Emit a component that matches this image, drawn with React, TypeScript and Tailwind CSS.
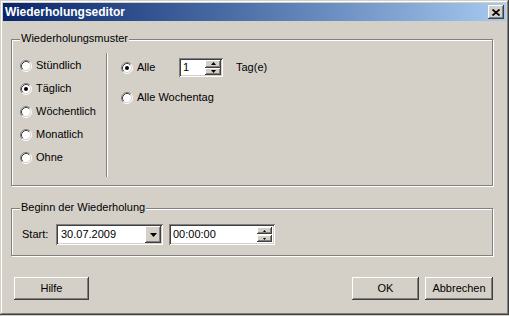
const raised =
  "shadow-[inset_-1px_-1px_0_#404040,inset_1px_1px_0_#ffffff,inset_-2px_-2px_0_#808080,inset_2px_2px_0_#d4d0c8]";
const sunken =
  "shadow-[inset_1px_1px_0_#808080,inset_-1px_-1px_0_#ffffff,inset_2px_2px_0_#404040,inset_-2px_-2px_0_#d4d0c8]";

const Radio = ({ label, checked = false, rowClass = "h-[23px]" }: { label: string; checked?: boolean; rowClass?: string }) => (
  <div className={`flex items-center gap-[4px] ${rowClass}`}>
    <svg width="12" height="12" viewBox="0 0 12 12" className="shrink-0">
      <circle cx="6" cy="6" r="5" fill="#ffffff" />
      <path d="M2.11 9.89 A5.5 5.5 0 0 1 9.89 2.11" stroke="#808080" fill="none" />
      <path d="M9.89 2.11 A5.5 5.5 0 0 1 2.11 9.89" stroke="#ffffff" fill="none" />
      <path d="M2.82 9.18 A4.5 4.5 0 0 1 9.18 2.82" stroke="#404040" fill="none" />
      <path d="M9.18 2.82 A4.5 4.5 0 0 1 2.82 9.18" stroke="#d4d0c8" fill="none" />
      {checked && <circle cx="6" cy="6" r="2" fill="#000000" />}
    </svg>
    <span className="whitespace-nowrap">{label}</span>
  </div>
);

const Group = ({ title, className, children }: { title: string; className: string; children?: React.ReactNode }) => (
  <div className={`relative border border-[#808080] shadow-[1px_1px_0_#ffffff,inset_1px_1px_0_#ffffff] ${className}`}>
    <span className="absolute left-[8px] top-[-8px] bg-[#d4d0c8] px-[1px] whitespace-nowrap">{title}</span>
    {children}
  </div>
);

const Arrow = ({ up, w = 5, h = 3 }: { up?: boolean; w?: number; h?: number }) => (
  <svg width={w} height={h} viewBox={`0 0 ${w} ${h}`}>
    <polygon points={up ? `${w / 2},0 ${w},${h} 0,${h}` : `0,0 ${w},0 ${w / 2},${h}`} fill="#000000" />
  </svg>
);

const Btn = ({ label, className }: { label: string; className: string }) => (
  <button className={`h-[23px] flex items-center justify-center bg-[#d4d0c8] ${raised} ${className}`}>{label}</button>
);

export default function App() {
  return (
    <div className="w-[509px] h-[316px] bg-[#d4d0c8] font-['Liberation_Sans',Arial,sans-serif] text-[11px] leading-[13px] text-black">
      <div className="h-[315px] flex flex-col shadow-[inset_-1px_-1px_0_#404040,inset_1px_1px_0_#d4d0c8,inset_-2px_-2px_0_#808080,inset_2px_2px_0_#ffffff]">
        {/* title bar */}
        <div className="mx-[3px] mt-[3px] h-[18px] flex items-center justify-between pl-[2px] pr-[2px] bg-linear-to-r from-[#0a246a] to-[#a6caf0]">
          <span className="text-white font-bold text-[12px] leading-[14px]">Wiederholungseditor</span>
          <div className={`w-[16px] h-[14px] flex items-center justify-center bg-[#d4d0c8] ${raised}`}>
            <svg width="8" height="7" viewBox="0 0 8 7">
              <path d="M0.5 0.5 L7.5 6.5 M7.5 0.5 L0.5 6.5" stroke="#000000" strokeWidth="1.7" />
            </svg>
          </div>
        </div>

        <Group title="Wiederholungsmuster" className="mt-[18px] ml-[11px] w-[482px] h-[147px] flex">
          <div className="w-[94px] pl-[8px] pt-[14px] flex flex-col">
            <Radio label="Stündlich" />
            <Radio label="Täglich" checked />
            <Radio label="Wöchentlich" />
            <Radio label="Monatlich" />
            <Radio label="Ohne" />
          </div>
          <div className="w-[2px] h-[124px] mt-[13px] border-l border-[#808080] bg-white" />
          <div className="pl-[13px] pt-[18px] flex flex-col">
            <div className="flex items-center h-[19px]">
              <div className="w-[58px]">
                <Radio label="Alle" checked rowClass="h-[19px]" />
              </div>
              <div className={`w-[44px] h-[19px] bg-white flex items-stretch p-[2px] ${sunken}`}>
                <span className="flex-1 pl-[2px] self-center">1</span>
                <div className="w-[16px] flex flex-col">
                  <div className={`flex-1 flex items-center justify-center bg-[#d4d0c8] ${raised}`}>
                    <Arrow up />
                  </div>
                  <div className={`flex-1 flex items-center justify-center bg-[#d4d0c8] ${raised}`}>
                    <Arrow />
                  </div>
                </div>
              </div>
              <span className="ml-[13px]">Tag(e)</span>
            </div>
            <div className="mt-[11px]">
              <Radio label="Alle Wochentag" rowClass="h-[19px]" />
            </div>
          </div>
        </Group>

        <Group title="Beginn der Wiederholung" className="mt-[22px] ml-[11px] w-[482px] h-[48px]">
          <div className="pt-[15px] pl-[10px] flex items-center">
            <span className="w-[34px]">Start:</span>
            <div className={`w-[107px] h-[21px] bg-white flex items-center p-[2px] ${sunken}`}>
              <span className="flex-1 pl-[3px]">30.07.2009</span>
              <div className={`w-[16px] h-[17px] flex items-center justify-center bg-[#d4d0c8] ${raised}`}>
                <Arrow w={7} h={4} />
              </div>
            </div>
            <div className={`ml-[6px] w-[106px] h-[21px] bg-white flex items-center p-[2px] ${sunken}`}>
              <span className="flex-1 pl-[2px]">00:00:00</span>
              <div className="w-[15px] mr-[1px] flex flex-col gap-[1px]">
                <div className={`h-[7px] flex items-center justify-center bg-[#d4d0c8] ${raised}`}>
                  <Arrow up w={3} h={2} />
                </div>
                <div className={`h-[7px] flex items-center justify-center bg-[#d4d0c8] ${raised}`}>
                  <Arrow w={3} h={2} />
                </div>
              </div>
            </div>
          </div>
        </Group>

        <div className="mt-[21px] pl-[14px] pr-[16px] flex">
          <Btn label="Hilfe" className="w-[75px]" />
          <Btn label="OK" className="ml-auto w-[67px]" />
          <Btn label="Abbrechen" className="ml-[6px] w-[68px]" />
        </div>
      </div>
    </div>
  );
}
